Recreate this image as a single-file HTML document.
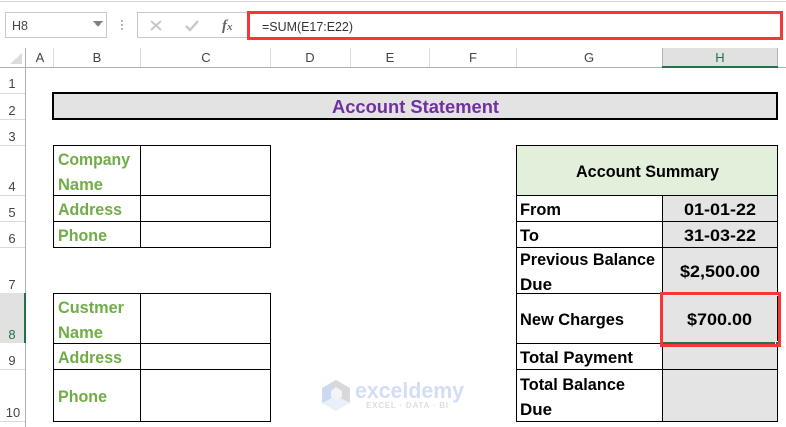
<!DOCTYPE html>
<html><head><meta charset="utf-8">
<style>
html,body{margin:0;padding:0;background:#fff;width:786px;height:427px;overflow:hidden}
svg{display:block}
text{font-family:"Liberation Sans",sans-serif}
.b{font-weight:bold;font-size:16.5px;fill:#000}
.g{font-weight:bold;font-size:16.5px;fill:#70ad47}
.h{font-size:13px;fill:#444;text-anchor:middle}
</style></head><body>
<svg width="786" height="427" viewBox="0 0 786 427" xmlns="http://www.w3.org/2000/svg" shape-rendering="crispEdges">
<rect width="786" height="427" fill="#fff"/>
<!-- toolbar -->
<rect x="0" y="1" width="786" height="1" fill="#d6d6d6"/>
<rect x="5.500" y="12.500" width="101" height="25" fill="#fff" stroke="#c8c8c8"/>
<text x="12" y="30" font-size="13" fill="#444" textLength="16" lengthAdjust="spacingAndGlyphs">H8</text>
<path d="M93 21h10l-5 6z" fill="#808080"/>
<g fill="#b4b4b4"><rect x="121" y="20" width="2" height="2"/><rect x="121" y="24" width="2" height="2"/><rect x="121" y="28" width="2" height="2"/></g>
<rect x="137.500" y="12.500" width="110" height="25" fill="#fff" stroke="#c8c8c8"/>
<g shape-rendering="auto">
<path d="M151 21l10 9M161 21l-10 9" stroke="#c8c8c8" stroke-width="2" fill="none"/>
<path d="M186 26l4 4 8-9" stroke="#c8c8c8" stroke-width="2.400" fill="none"/>
<text x="222" y="30" font-size="15" font-style="italic" font-weight="bold" fill="#666" style="font-family:'Liberation Serif',serif">f<tspan font-size="11">x</tspan></text>
</g>
<text x="262" y="31" font-size="13" fill="#333" textLength="91" lengthAdjust="spacingAndGlyphs">=SUM(E17:E22)</text>
<rect x="248.500" y="12.500" width="533" height="26" fill="none" stroke="#f93636" stroke-width="3"/>

<!-- column header -->
<path d="M22 53v11H10z" fill="#dcdcdc"/>
<rect x="662" y="48" width="115" height="19" fill="#e1e1e1"/>
<g fill="#dadada">
<rect x="53" y="48" width="1" height="19"/><rect x="140" y="48" width="1" height="19"/><rect x="270" y="48" width="1" height="19"/><rect x="350" y="48" width="1" height="19"/><rect x="429" y="48" width="1" height="19"/><rect x="516" y="48" width="1" height="19"/>
</g>
<rect x="662" y="48" width="1" height="19" fill="#b4b4b4"/><rect x="777" y="48" width="1" height="19" fill="#b4b4b4"/>
<rect x="0" y="67" width="786" height="1" fill="#b0b0b0"/>
<rect x="662" y="66" width="116" height="2" fill="#217346"/>
<rect x="25" y="48" width="1" height="379" fill="#b0b0b0"/>
<text class="h" x="40" y="62">A</text><text class="h" x="97" y="62">B</text><text class="h" x="206" y="62">C</text><text class="h" x="310" y="62">D</text><text class="h" x="390" y="62">E</text><text class="h" x="473" y="62">F</text><text class="h" x="589" y="62">G</text><text class="h" x="720" y="62" style="fill:#217346">H</text>

<!-- row header -->
<rect x="0" y="293" width="25" height="50" fill="#e1e1e1"/>
<rect x="24" y="293" width="2" height="50" fill="#217346"/>
<g fill="#dadada">
<rect x="0" y="93" width="25" height="1"/><rect x="0" y="145" width="25" height="1"/><rect x="0" y="195" width="25" height="1"/><rect x="0" y="221" width="25" height="1"/><rect x="0" y="247" width="25" height="1"/><rect x="0" y="369" width="25" height="1"/><rect x="0" y="421" width="25" height="1"/><rect x="0" y="119" width="25" height="1"/>
</g>
<text class="h" x="12" y="88">1</text><text class="h" x="12" y="115">2</text><text class="h" x="12" y="141">3</text><text class="h" x="12" y="191">4</text><text class="h" x="12" y="217">5</text><text class="h" x="12" y="243">6</text><text class="h" x="12" y="289">7</text><text class="h" x="12" y="339" style="fill:#217346">8</text><text class="h" x="12" y="365">9</text><text class="h" x="13" y="417">10</text>

<!-- title -->
<rect x="53" y="93" width="724" height="26" fill="#e3e3e3" stroke="#000" stroke-width="2"/>
<text x="332" y="113" font-size="18" font-weight="bold" fill="#7030a0" textLength="167" lengthAdjust="spacingAndGlyphs" shape-rendering="auto">Account Statement</text>

<!-- left tables -->
<g fill="none" stroke="#000" stroke-width="1">
<path d="M53.500 145.500H270.500V247.500H53.500ZM53.500 195.500H270.500M53.500 221.500H270.500M140.500 145.500V247.500"/>
<path d="M53.500 293.500H270.500V421.500H53.500ZM53.500 343.500H270.500M53.500 369.500H270.500M140.500 293.500V421.500"/>
</g>
<g shape-rendering="auto">
<text class="g" x="58" y="165" textLength="72" lengthAdjust="spacingAndGlyphs">Company</text>
<text class="g" x="58" y="190" textLength="45" lengthAdjust="spacingAndGlyphs">Name</text>
<text class="g" x="58" y="215" textLength="64" lengthAdjust="spacingAndGlyphs">Address</text>
<text class="g" x="58" y="241" textLength="49" lengthAdjust="spacingAndGlyphs">Phone</text>
<text class="g" x="58" y="313" textLength="66" lengthAdjust="spacingAndGlyphs">Custmer</text>
<text class="g" x="58" y="338" textLength="45" lengthAdjust="spacingAndGlyphs">Name</text>
<text class="g" x="58" y="363" textLength="64" lengthAdjust="spacingAndGlyphs">Address</text>
<text class="g" x="58" y="402" textLength="49" lengthAdjust="spacingAndGlyphs">Phone</text>
</g>

<!-- right table -->
<rect x="516" y="145" width="261" height="50" fill="#e2efda"/>
<rect x="662" y="195" width="115" height="226" fill="#e4e4e4"/>
<g fill="none" stroke="#000" stroke-width="1">
<path d="M516.500 145.500H777.500V421.500H516.500ZM516.500 195.500H777.500M516.500 221.500H777.500M516.500 247.500H777.500M516.500 293.500H777.500M516.500 343.500H777.500M516.500 369.500H777.500M662.500 195.500V421.500"/>
</g>
<g shape-rendering="auto">
<text class="b" x="576" y="177" textLength="143" lengthAdjust="spacingAndGlyphs">Account Summary</text>
<text class="b" x="520" y="215" textLength="41" lengthAdjust="spacingAndGlyphs">From</text>
<text class="b" x="520" y="241" textLength="19" lengthAdjust="spacingAndGlyphs">To</text>
<text class="b" x="520" y="265" textLength="135" lengthAdjust="spacingAndGlyphs">Previous Balance</text>
<text class="b" x="520" y="290" textLength="32" lengthAdjust="spacingAndGlyphs">Due</text>
<text class="b" x="520" y="325" textLength="104" lengthAdjust="spacingAndGlyphs">New Charges</text>
<text class="b" x="520" y="363" textLength="113" lengthAdjust="spacingAndGlyphs">Total Payment</text>
<text class="b" x="520" y="390" textLength="105" lengthAdjust="spacingAndGlyphs">Total Balance</text>
<text class="b" x="520" y="415" textLength="32" lengthAdjust="spacingAndGlyphs">Due</text>
<text class="b" x="684" y="215" textLength="72" lengthAdjust="spacingAndGlyphs">01-01-22</text>
<text class="b" x="684" y="241" textLength="72" lengthAdjust="spacingAndGlyphs">31-03-22</text>
<text class="b" x="680" y="277" textLength="80" lengthAdjust="spacingAndGlyphs">$2,500.00</text>
<text class="b" x="687" y="325" textLength="65" lengthAdjust="spacingAndGlyphs">$700.00</text>
</g>

<!-- selection -->
<rect x="663" y="342" width="114" height="2" fill="#217346"/>
<rect x="663" y="295" width="115" height="1" fill="#f0f0f0"/>
<rect x="775" y="341" width="4" height="4" fill="#fff"/>
<rect x="776" y="342" width="2" height="2" fill="#217346"/>
<rect x="661.500" y="293.500" width="118" height="52" fill="none" stroke="#f93636" stroke-width="3"/>

<!-- watermark -->
<g shape-rendering="auto">
<path d="M336 380l-14 8v15l14 8 0-15-1-8z" fill="#ccd9f5"/>
<path d="M336 380l14 8v15l-14-7-5-3v-7z" fill="#d8d8dc"/>
<path d="M322 403l14-7 14 7-14 8z" fill="#eaf0f8"/>
<path d="M336 387l6 4v6l-6 3-5-3v-6z" fill="#f2f4f8"/>
<text x="355" y="398" font-size="22" font-weight="bold" fill="#d3ddf6" textLength="109" lengthAdjust="spacingAndGlyphs">exceldemy</text>
<text x="366" y="408" font-size="8" font-weight="bold" fill="#dedede" textLength="82" lengthAdjust="spacing">EXCEL · DATA · BI</text>
</g>
</svg>
</body></html>
